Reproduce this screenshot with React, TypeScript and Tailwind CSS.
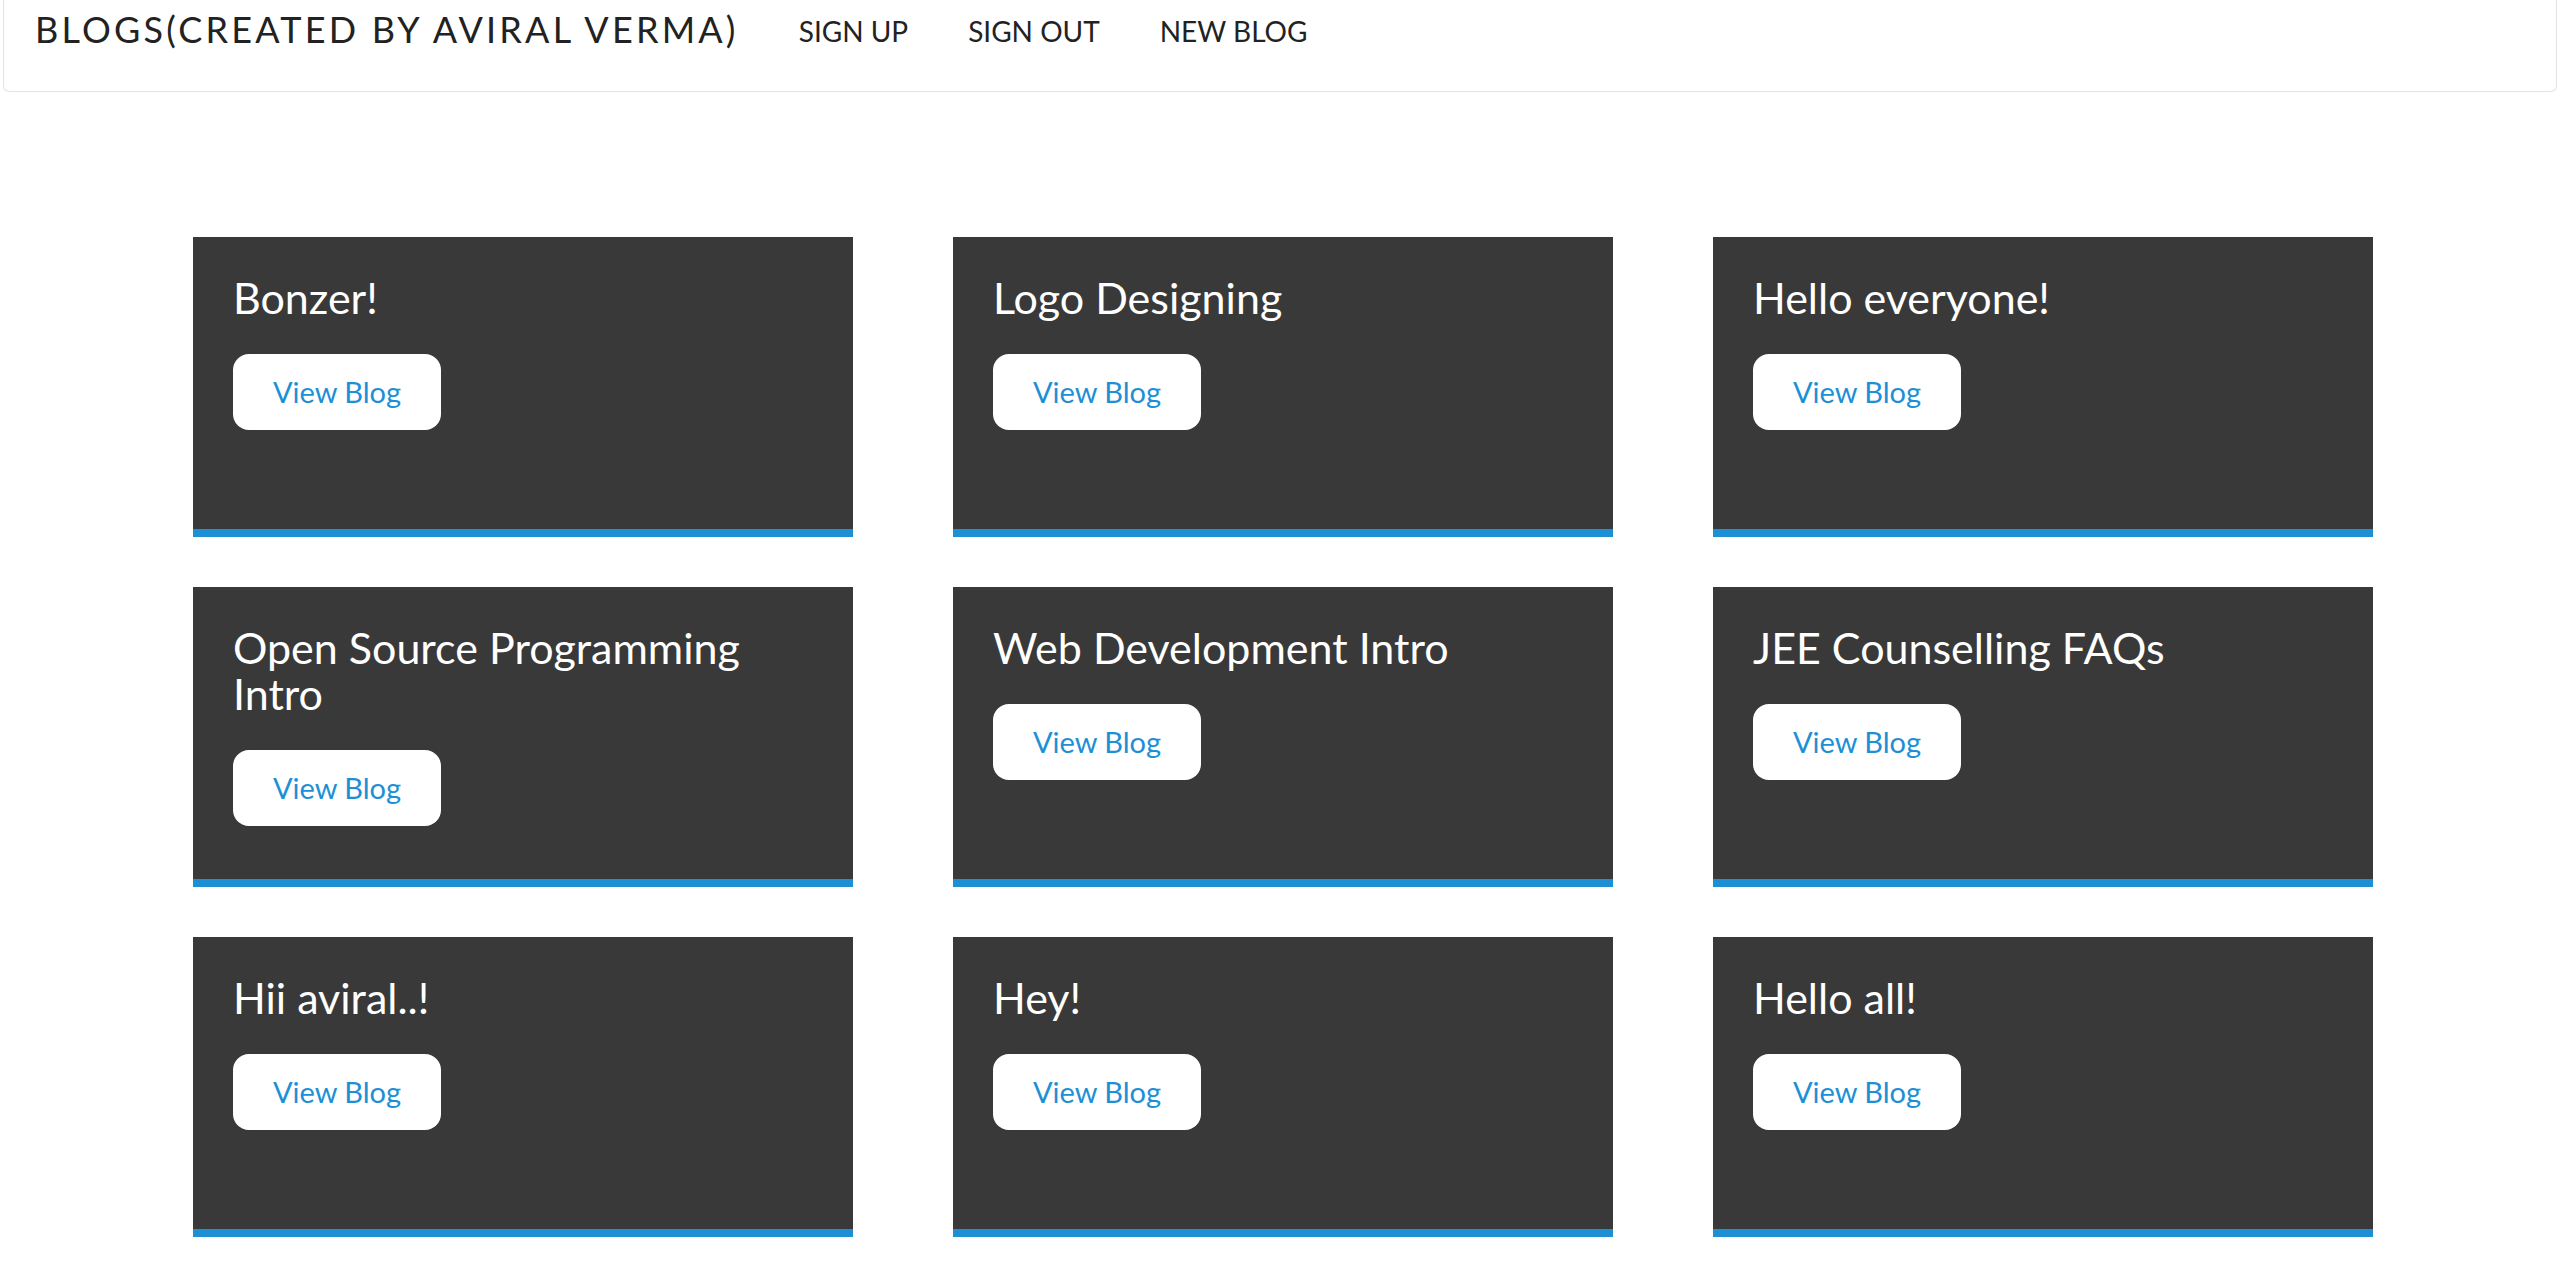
import React from 'react';

const blogs = [
    'Bonzer!',
    'Logo Designing',
    'Hello everyone!',
    'Open Source Programming Intro',
    'Web Development Intro',
    'JEE Counselling FAQs',
    'Hii aviral..!',
    'Hey!',
    'Hello all!',
];

function BlogCard({ title }: { title: string }) {
    return (
        <div className="h-[300px] bg-[#393939] border-b-[8px] border-[#1d90d5] pt-[38px] px-[40px]">
            <h3 className="text-[43px] leading-[46px] text-white font-normal">{title}</h3>
            <button className="mt-[33px] w-[208px] h-[76px] rounded-[16px] bg-white text-[#1d90d5] text-[29px]">
                View Blog
            </button>
        </div>
    );
}

export default function App() {
    return (
        <div className="min-h-screen bg-white" style={{ fontFamily: 'Lato, "Open Sans", sans-serif' }}>
            {/* Navbar */}
            <nav className="mx-[3px] h-[92px] border-x border-b border-[#e3e3e3] rounded-b-[6px] flex items-start pt-[6px] pl-[31px]">
                <span className="text-[36px] leading-[46px] tracking-[3.2px] text-[#222]">BLOGS(CREATED BY AVIRAL VERMA)</span>
                <ul className="flex gap-[60px] ml-[60px] pt-[5px]">
                    <li className="text-[28px] leading-[40px] text-[#222]">SIGN UP</li>
                    <li className="text-[28px] leading-[40px] text-[#222]">SIGN OUT</li>
                    <li className="text-[28px] leading-[40px] text-[#222]">NEW BLOG</li>
                </ul>
            </nav>

            {/* Blog grid */}
            <main className="ml-[193px] w-[2180px] mt-[145px] grid grid-cols-3 gap-x-[100px] gap-y-[50px]">
                {blogs.map((b) => (
                    <BlogCard key={b} title={b} />
                ))}
            </main>
        </div>
    );
}
